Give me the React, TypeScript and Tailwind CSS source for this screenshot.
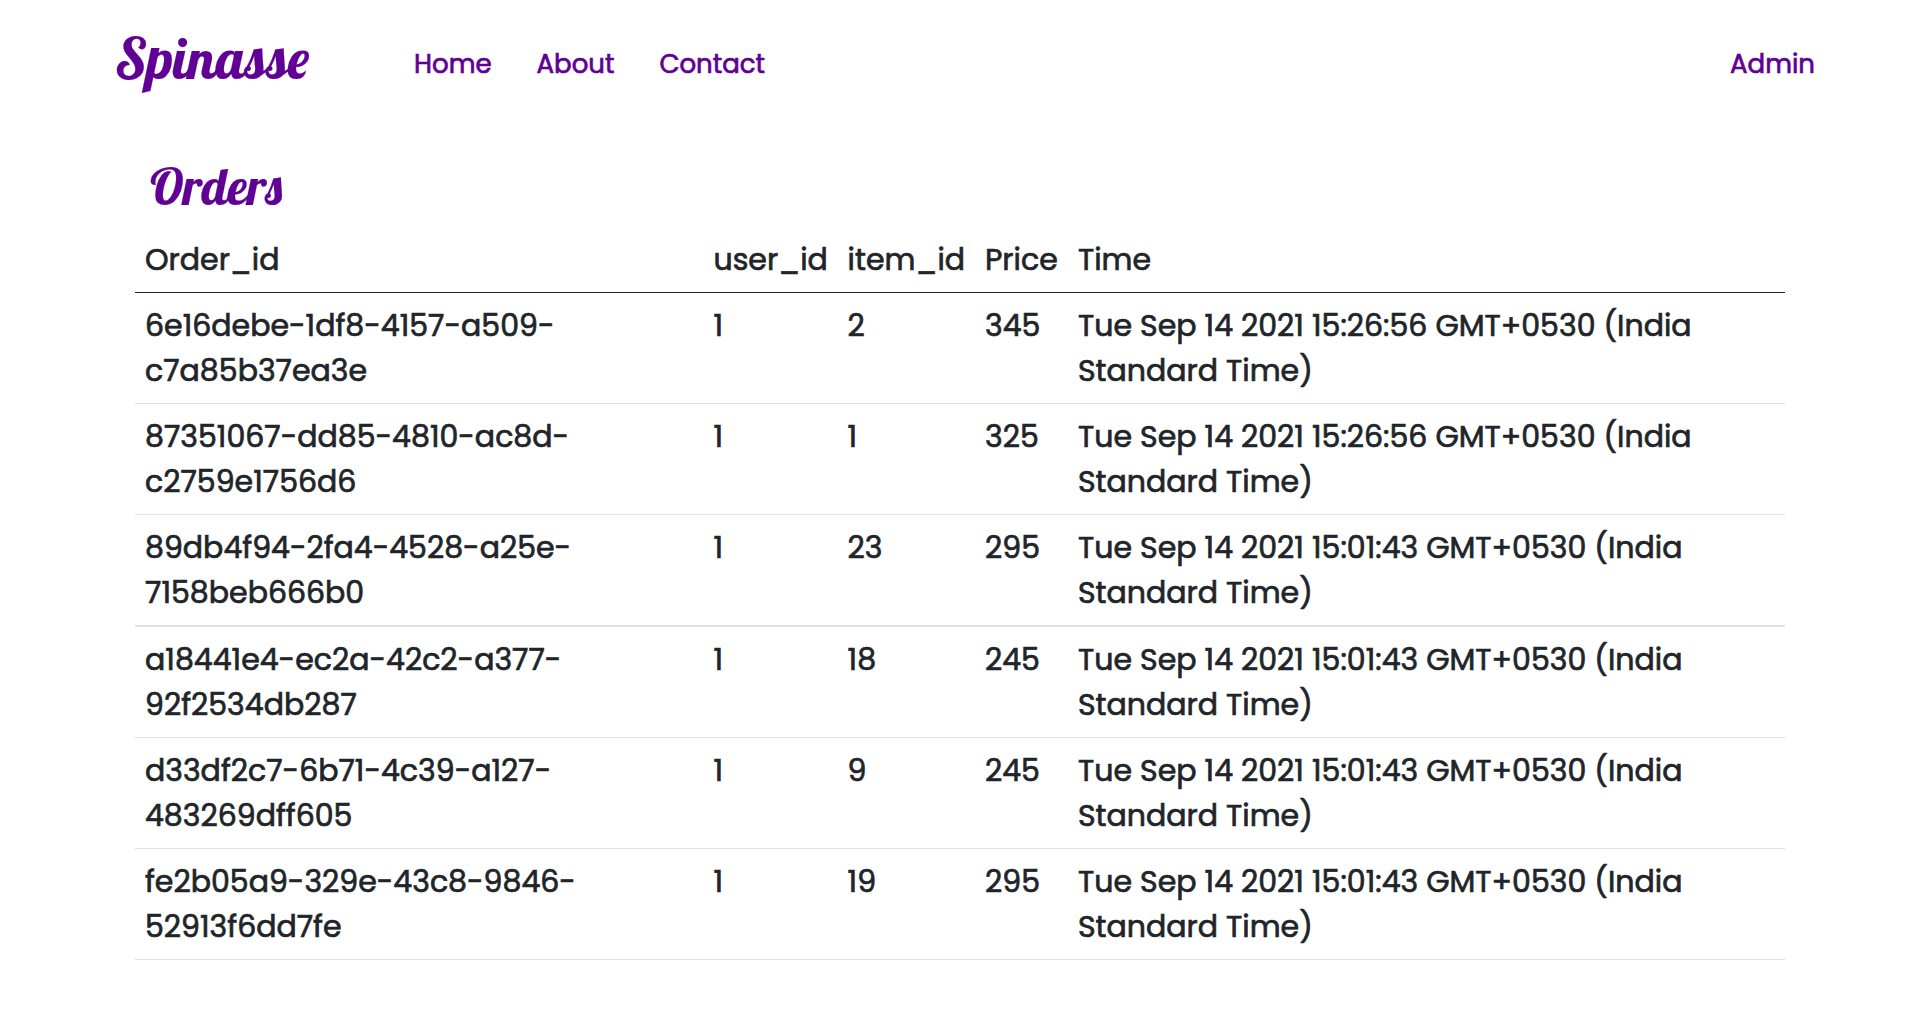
const orders = [
  { id: "6e16debe-1df8-4157-a509-c7a85b37ea3e", user: "1", item: "2", price: "345", time: "15:26:56" },
  { id: "87351067-dd85-4810-ac8d-c2759e1756d6", user: "1", item: "1", price: "325", time: "15:26:56" },
  { id: "89db4f94-2fa4-4528-a25e-7158beb666b0", user: "1", item: "23", price: "295", time: "15:01:43" },
  { id: "a18441e4-ec2a-42c2-a377-92f2534db287", user: "1", item: "18", price: "245", time: "15:01:43" },
  { id: "d33df2c7-6b71-4c39-a127-483269dff605", user: "1", item: "9", price: "245", time: "15:01:43" },
  { id: "fe2b05a9-329e-43c8-9846-52913f6dd7fe", user: "1", item: "19", price: "295", time: "15:01:43" },
];

export default function App() {
  return (
    <div className="min-h-[1020px] bg-white font-['Poppins','Inter',sans-serif] text-[#212529] [-webkit-text-stroke:0.7px]">
      <header className="flex h-[128px] items-center pl-[115px] pr-[105px] text-[#600094]">
        <a
          href="#"
          className="mr-[104px] w-[195px] whitespace-nowrap pb-[13px] font-['Lobster','Liberation_Serif',serif] text-[56px] leading-none [-webkit-text-stroke:0.2px]"
        >
          Spinasse
        </a>
        <nav className="flex flex-1 gap-[45px] text-[26px] leading-[40px]">
          <a href="#">Home</a>
          <a href="#">About</a>
          <a href="#">Contact</a>
          <a href="#" className="ml-auto">Admin</a>
        </nav>
      </header>
      <main className="mx-[135px]">
        <h1 className="h-[102px] pl-[15px] pt-[32px] font-['Lobster','Liberation_Serif',serif] text-[50px] leading-[54px] text-[#600094] [-webkit-text-stroke:0.2px]">
          Orders
        </h1>
        <table className="w-[1650px] table-fixed border-separate border-spacing-0 text-left text-[30px] leading-[45px] [&_td:nth-child(2)]:pl-[10.5px] [&_td:nth-child(3)]:pl-[10.6px] [&_th:nth-child(2)]:pl-[10.5px] [&_th:nth-child(3)]:pl-[10.6px]">
          <colgroup>
            <col className="w-[568px]" />
            <col className="w-[134px]" />
            <col className="w-[138px]" />
            <col className="w-[93px]" />
            <col />
          </colgroup>
          <thead>
            <tr>
              {["Order_id", "user_id", "item_id", "Price", "Time"].map((h) => (
                <th key={h} className="whitespace-nowrap border-b border-[#212529] px-[10px] pb-[10px] pt-[7px] font-normal">
                  {h}
                </th>
              ))}
            </tr>
          </thead>
          <tbody className="align-top [&_td]:border-b [&_td]:border-[#dee2e6] [&_td]:py-[10px] [&_td]:px-[10px] [&_tr:nth-child(3)_td]:border-b-2">
            {orders.map((o) => (
              <tr key={o.id}>
                <td className="whitespace-nowrap">
                  {o.id.slice(0, 24)}
                  <br />
                  {o.id.slice(24)}
                </td>
                <td>{o.user}</td>
                <td>{o.item}</td>
                <td>{o.price}</td>
                <td className="whitespace-nowrap">
                  {`Tue Sep 14 2021 ${o.time} GMT+0530 (India`}
                  <br />
                  Standard Time)
                </td>
              </tr>
            ))}
          </tbody>
        </table>
      </main>
    </div>
  );
}
